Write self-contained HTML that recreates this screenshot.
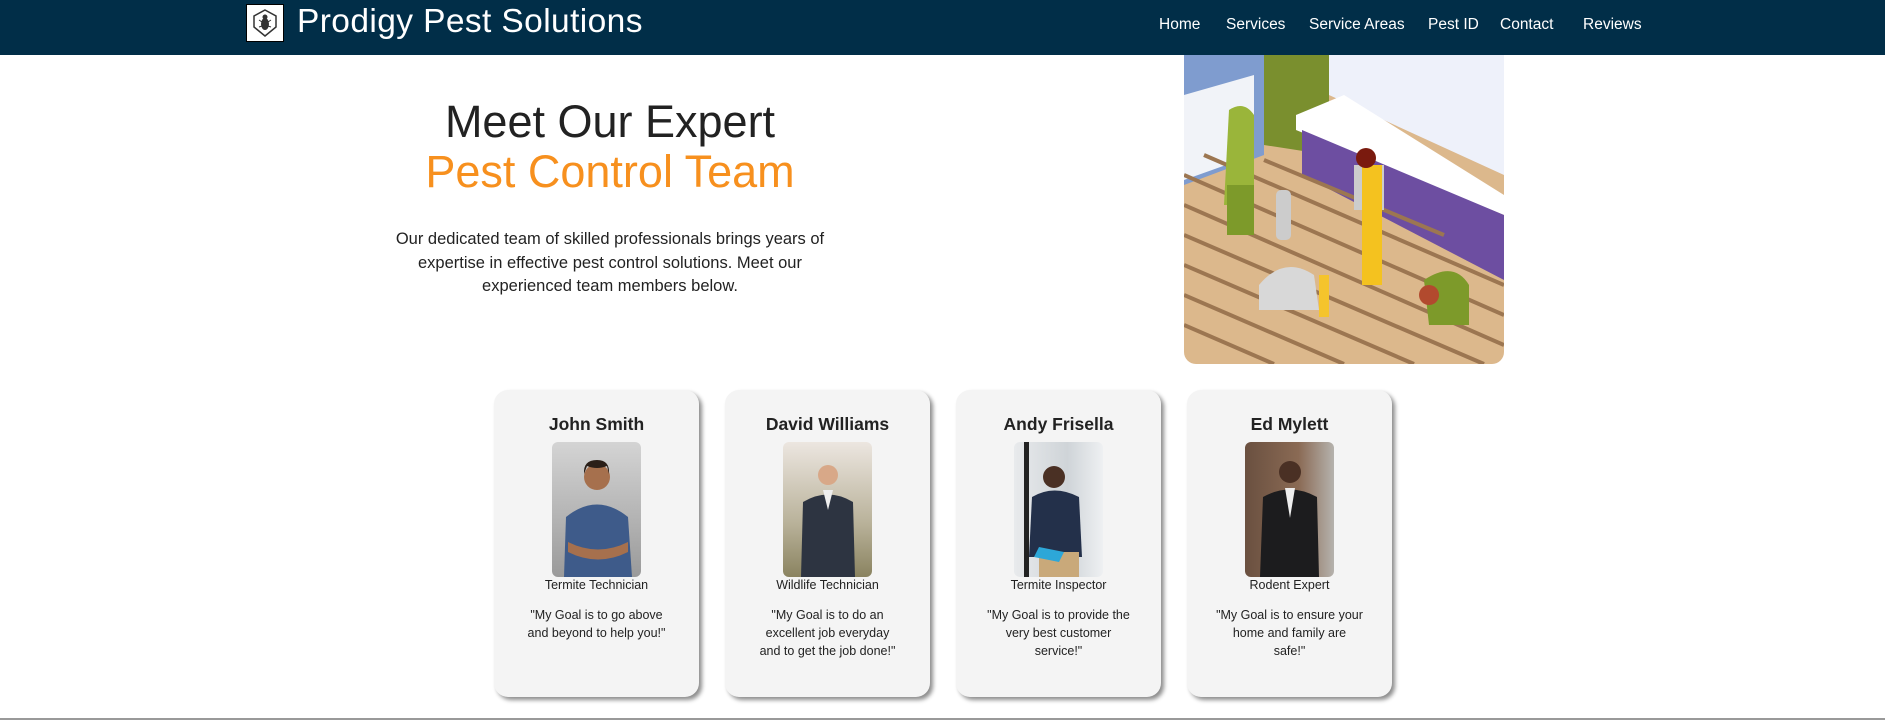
<!DOCTYPE html>
<html><head><meta charset="utf-8"><style>
*{margin:0;padding:0;box-sizing:border-box}
body{width:1885px;height:720px;background:#fff;font-family:"Liberation Sans",sans-serif;position:relative;overflow:hidden;color:#222}
.nav{position:absolute;left:0;top:0;width:1885px;height:55px;background:#012e48}
.logo{position:absolute;left:246px;top:4px;width:38px;height:38px;background:#fff;border:1px solid #000}
.title{position:absolute;left:297px;top:3px;font-size:33.5px;color:#fff;letter-spacing:.4px}
.links{position:absolute;top:16px;font-size:15.5px;color:#fff}
.links span{position:absolute;white-space:nowrap}
.h1{position:absolute;left:300px;width:620px;text-align:center;font-size:45px;}
.p{position:absolute;left:380px;width:460px;top:228px;text-align:center;font-size:16.5px;line-height:23.5px;color:#222}
.card{position:absolute;top:390px;width:205px;height:307px;background:#f4f4f4;border-radius:14px;box-shadow:3px 3px 4px rgba(0,0,0,.45);text-align:center}
.card h3{position:absolute;top:24px;width:100%;font-size:17.5px;font-weight:bold;color:#222}
.ph{position:absolute;left:58px;top:52px;width:89px;height:135px;border-radius:6px;overflow:hidden}
.role{position:absolute;top:188px;width:100%;font-size:12.5px}
.q{position:absolute;top:216px;left:29px;width:147px;font-size:12.5px;line-height:18px}
.bot{position:absolute;left:0;top:718px;width:1885px;height:2px;background:#999}
</style></head><body>
<div class="nav">
 <div class="logo"><svg width="36" height="36" viewBox="0 0 36 36"><path d="M18 5 L29 11 V22 L18 31 L7 22 V11Z" fill="none" stroke="#333" stroke-width="1.5"/><ellipse cx="18" cy="19" rx="4" ry="6" fill="#333"/><circle cx="18" cy="12" r="2.5" fill="#333"/><path d="M12 15l3 2M24 15l-3 2M12 22l3-1M24 22l-3-1" stroke="#333"/></svg></div>
 <div class="title">Prodigy Pest Solutions</div>
 <div class="links"><span style="left:1159px">Home</span><span style="left:1226px">Services</span><span style="left:1309px">Service Areas</span><span style="left:1428px">Pest ID</span><span style="left:1500px">Contact</span><span style="left:1583px">Reviews</span></div>
</div>
<div class="h1" style="top:96px;color:#222">Meet Our Expert</div>
<div class="h1" style="top:146px;color:#f7901e">Pest Control Team</div>
<div class="p">Our dedicated team of skilled professionals brings years of expertise in effective pest control solutions. Meet our experienced team members below.</div>
<svg style="position:absolute;left:1184px;top:55px" width="320" height="309" viewBox="0 0 320 309">
<defs><clipPath id="c"><path d="M0 0H320V297a12 12 0 0 1-12 12H12A12 12 0 0 1 0 297Z"/></clipPath></defs>
<g clip-path="url(#c)">
<rect width="320" height="309" fill="#dcb88c"/>
<path d="M0 0H320V80L0 0Z" fill="#b7c7e6"/>
<path d="M0 0H80V100L0 130Z" fill="#7f9ccf"/>
<path d="M0 40L70 20V100L0 125Z" fill="#f1f3f8"/>
<path d="M80 0H145V100L80 90Z" fill="#7a8f2e"/>
<path d="M145 0H320V120L145 40Z" fill="#eef1fa"/>
<path d="M112 60L160 40L320 140V160L112 75Z" fill="#fff"/>
<path d="M118 75L320 160V225L118 120Z" fill="#6d4ea1"/>
<g stroke="#9c7651" stroke-width="4">
<path d="M0 150L320 290M0 180L300 309M0 210L230 309M0 240L160 309M0 270L90 309M0 120L320 260M20 100L320 230M80 105L260 180"/></g>
<path d="M45 55q15-10 25 5v90h-30Z" fill="#9ab53a"/>
<rect x="43" y="130" width="27" height="50" fill="#7d9a2a"/>
<rect x="92" y="135" width="15" height="50" rx="5" fill="#ccc"/>
<rect x="170" y="110" width="30" height="45" fill="#ccc"/>
<path d="M178 110h20v120h-20Z" fill="#f4c21f"/>
<circle cx="182" cy="103" r="10" fill="#7a1a0e"/>
<path d="M75 230q25-30 55-10l5 35h-60Z" fill="#d8d8d8"/>
<rect x="135" y="220" width="10" height="42" fill="#f5c42c"/>
<path d="M240 225q30-20 45 5v40h-40Z" fill="#7d9a2a"/>
<circle cx="245" cy="240" r="10" fill="#b24a2e"/>
</g></svg>

<div class="card" style="left:494px"><h3>John Smith</h3><div class="ph" style="background:linear-gradient(#d4d4d4,#9a9a9a)"><svg width="89" height="135"><circle cx="45" cy="35" r="13" fill="#a6704d"/><path d="M45 18q-14 0-13 14l3-8q10 4 20 0l2 8q1-14-12-14Z" fill="#2a1f18"/><path d="M12 135 L14 75 Q45 50 76 75 L80 135Z" fill="#3e5b8a"/><path d="M16 100q30 15 60 0l0 10q-30 15-60 0Z" fill="#a6704d"/></svg></div><div class="role">Termite Technician</div><div class="q">"My Goal is to go above and beyond to help you!"</div></div>
<div class="card" style="left:725px"><h3>David Williams</h3><div class="ph" style="background:linear-gradient(#ece6e0,#b9b29a 60%,#8a8360)"><svg width="89" height="135"><circle cx="45" cy="33" r="10" fill="#d8a888"/><path d="M18 135 L20 60 Q45 45 70 60 L72 135Z" fill="#2d3441"/><path d="M40 48h10l-5 20Z" fill="#eee"/></svg></div><div class="role">Wildlife Technician</div><div class="q">"My Goal is to do an excellent job everyday and to get the job done!"</div></div>
<div class="card" style="left:956px"><h3>Andy Frisella</h3><div class="ph" style="background:linear-gradient(90deg,#e8eaec,#cfd4d8 60%,#eef0f2)"><svg width="89" height="135"><rect x="10" y="0" width="5" height="135" fill="#222"/><circle cx="40" cy="35" r="11" fill="#4a3024"/><path d="M15 115 L18 55 Q40 42 65 55 L68 115Z" fill="#23304a"/><rect x="25" y="110" width="40" height="25" fill="#c9a97a"/><path d="M25 105l25 5 -5 10-25-5Z" fill="#2da7d8"/></svg></div><div class="role">Termite Inspector</div><div class="q">"My Goal is to provide the very best customer service!"</div></div>
<div class="card" style="left:1187px"><h3>Ed Mylett</h3><div class="ph" style="background:linear-gradient(90deg,#6a5040,#8a6a54 60%,#b5b2ad)"><svg width="89" height="135"><circle cx="45" cy="30" r="11" fill="#4a3024"/><path d="M15 135 L18 55 Q45 40 72 55 L74 135Z" fill="#1c1c1e"/><path d="M40 46h10l-5 30Z" fill="#eee"/></svg></div><div class="role">Rodent Expert</div><div class="q">"My Goal is to ensure your home and family are safe!"</div></div>
<div class="bot"></div>
</body></html>
